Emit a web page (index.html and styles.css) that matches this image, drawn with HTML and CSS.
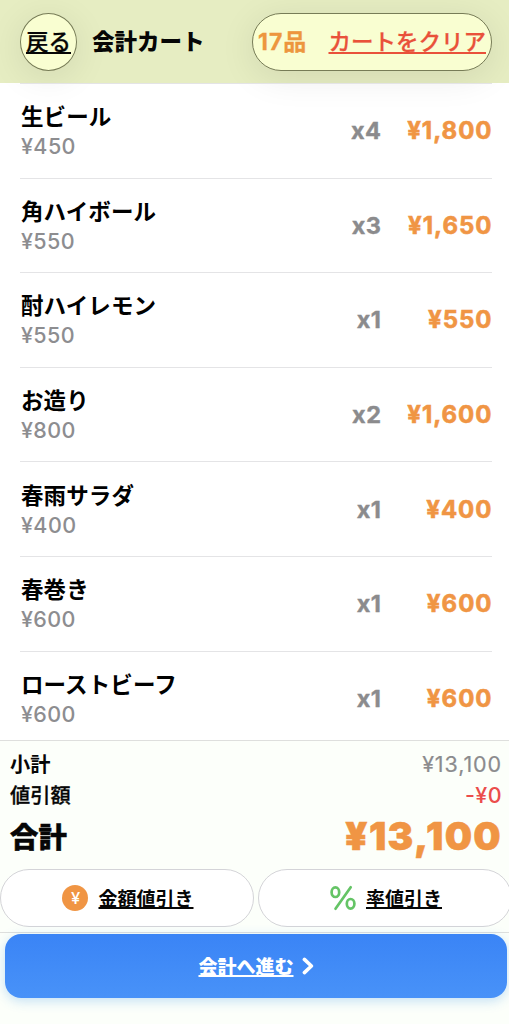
FILE: index.html
```html
<!DOCTYPE html>
<html lang="ja">
<head>
<meta charset="utf-8">
<meta name="viewport" content="width=device-width, initial-scale=1">
<title>会計カート</title>
<link rel="stylesheet" href="styles.css">
</head>
<body>
<div class="app">
  <header class="header">
    <button class="back"><span class="link">戻る</span></button>
    <h1 class="title">会計カート</h1>
    <div class="cart-pill"><span class="count">17品</span><span class="clear link">カートをクリア</span></div>
  </header>
  <main class="list">
    <div class="item"><div class="info"><div class="name">生ビール</div><div class="price">¥450</div></div><div class="qty">x4</div><div class="sum">¥1,800</div></div>
    <div class="item"><div class="info"><div class="name">角ハイボール</div><div class="price">¥550</div></div><div class="qty">x3</div><div class="sum">¥1,650</div></div>
    <div class="item"><div class="info"><div class="name">酎ハイレモン</div><div class="price">¥550</div></div><div class="qty">x1</div><div class="sum">¥550</div></div>
    <div class="item"><div class="info"><div class="name">お造り</div><div class="price">¥800</div></div><div class="qty">x2</div><div class="sum">¥1,600</div></div>
    <div class="item"><div class="info"><div class="name">春雨サラダ</div><div class="price">¥400</div></div><div class="qty">x1</div><div class="sum">¥400</div></div>
    <div class="item"><div class="info"><div class="name">春巻き</div><div class="price">¥600</div></div><div class="qty">x1</div><div class="sum">¥600</div></div>
    <div class="item"><div class="info"><div class="name">ローストビーフ</div><div class="price">¥600</div></div><div class="qty">x1</div><div class="sum">¥600</div></div>
  </main>
  <section class="summary">
    <div class="line subtotal"><span>小計</span><span class="value">¥13,100</span></div>
    <div class="line discount"><span>値引額</span><span class="value">-¥0</span></div>
    <div class="line total"><span>合計</span><span class="value">¥13,100</span></div>
    <div class="discounts">
      <button class="option"><span class="yen-icon">¥</span><span class="option-label">金額値引き</span></button>
      <button class="option">
        <svg class="percent-icon" viewBox="0 0 26 26" fill="none" stroke="#65c466" stroke-width="2.7" stroke-linecap="round"><ellipse cx="5.4" cy="7.2" rx="3.8" ry="4.8"/><ellipse cx="20.6" cy="18.8" rx="3.8" ry="4.8"/><path d="M20.7 2.3 5.5 23.7"/></svg>
        <span class="option-label">率値引き</span>
      </button>
    </div>
  </section>
  <footer class="footer">
    <button class="checkout"><span class="checkout-label">会計へ進む</span><svg class="chevron" viewBox="0 0 12 18" fill="none" stroke="#fff" stroke-width="3.6" stroke-linecap="round" stroke-linejoin="round"><path d="M2.4 2.4 9.4 9 2.4 15.6"/></svg></button>
  </footer>
</div>
</body>
</html>
```
FILE: styles.css
```css
* { box-sizing: border-box; }
body {
  margin: 0;
  font-family: Inter, "Noto Sans CJK JP", sans-serif;
  color: #060606;
  background: #fff;
}
button { font: inherit; color: inherit; padding: 0; margin: 0; }
.app {
  display: flex;
  flex-direction: column;
  width: 509px;
  height: 1024px;
  overflow: hidden;
}
.header {
  display: flex;
  align-items: center;
  flex: none;
  height: 83px;
  padding: 1px 17px 0 20px;
  background: #e6edc2;
  font-size: 22.5px;
  line-height: 32px;
}
.back, .cart-pill {
  height: 58px;
  border: 1px solid #777c57;
  background: #f9fed1;
  box-shadow: 0 6px 36px rgba(0, 0, 0, 0.09);
  white-space: nowrap;
}
.back {
  width: 57px;
  border-radius: 50%;
  font-weight: 500;
  -webkit-text-stroke: 0.25px;
}
.link {
  text-decoration: underline;
  text-decoration-thickness: 1.5px;
  text-underline-offset: 2px;
  text-decoration-skip-ink: none;
}
.title {
  margin: 0 0 0 15px;
  font-size: 22.5px;
  font-weight: 900;
  line-height: 32px;
}
.cart-pill {
  display: flex;
  align-items: center;
  justify-content: space-between;
  width: 240px;
  margin-left: auto;
  padding: 0 5px;
  border-radius: 29px;
}
.count { color: #ed963e; font-weight: 700; font-size: 23px; letter-spacing: 1px; -webkit-text-stroke: 0.3px; }
.clear { color: #e9513a; font-weight: 500; -webkit-text-stroke: 0.25px; }
.list {
  flex: none;
  height: 657px;
  padding: 0 17px 0 20px;
  overflow: hidden;
}
.item {
  display: flex;
  align-items: center;
  height: 94.6px;
  border-top: 1px solid #e4e4e6;
}
.info { flex: 1; padding: 1px 0 0 1px; }
.name {
  font-size: 22.5px;
  font-weight: 700;
  line-height: 30px;
  letter-spacing: 0.1px;
  color: #000;
}
.price {
  font-size: 21.5px;
  font-weight: 500;
  line-height: 28px;
  letter-spacing: 0.4px;
  color: #8d8d90;
}
.qty {
  font-size: 23.5px;
  font-weight: 700;
  letter-spacing: 0.5px;
  -webkit-text-stroke: 0.4px;
  color: #8b8b8d;
}
.sum {
  width: 111px;
  margin-right: -0.5px;
  text-align: right;
  font-size: 24px;
  font-weight: 700;
  letter-spacing: 1px;
  -webkit-text-stroke: 0.6px;
  color: #f09544;
}
.summary {
  flex: none;
  height: 192px;
  padding-top: 7px;
  border-top: 1px solid #dedfdd;
  background: #fcfffa;
}
.line {
  display: flex;
  align-items: center;
  justify-content: space-between;
  padding: 0 7px 0 10px;
  height: 31px;
  font-size: 20.2px;
}
.value { font-size: 21.5px; letter-spacing: 0.9px; }
.subtotal { font-weight: 700; }
.subtotal .value { font-weight: 400; color: #8b8b8d; -webkit-text-stroke: 0.2px; }
.discount { font-weight: 500; }
.discount > span:first-child { -webkit-text-stroke: 0.3px; }
.discount .value { color: #eb4d4b; letter-spacing: 0.4px; }
.total {
  height: 51px;
  font-size: 28.4px;
  font-weight: 900;
  -webkit-text-stroke: 0.5px;
}
.total .value { font-size: 38.5px; font-weight: 900; letter-spacing: 1.3px; color: #f09544; }
.discounts {
  display: flex;
  gap: 4px;
  width: 512px;
  padding-top: 8px;
}
.option {
  display: flex;
  align-items: center;
  justify-content: center;
  flex: 1;
  height: 58px;
  padding-left: 2px;
  border: 1.5px solid #d4d4d8;
  border-radius: 29px;
  background: #fff;
  font-size: 19px;
  font-weight: 700;
  line-height: 28px;
}
.option-label, .checkout-label {
  padding-top: 3px;
  text-decoration: underline;
  text-decoration-thickness: 1.5px;
  text-underline-offset: 1px;
  text-decoration-skip-ink: none;
}
.yen-icon {
  width: 26px;
  height: 26px;
  margin-right: 10px;
  border-radius: 50%;
  background: #f09544;
  color: #fff;
  font-size: 16.5px;
  font-weight: 500;
  line-height: 26px;
  text-align: center;
}
.percent-icon { width: 26px; height: 26px; margin-right: 10px; }
.footer {
  flex: 1;
  padding: 1px 2px 0 5px;
  border-top: 1px solid #dedfdd;
  background: #fcfffa;
}
.checkout {
  display: flex;
  align-items: center;
  justify-content: center;
  width: 502px;
  height: 64px;
  border: 0;
  border-radius: 16px;
  background: linear-gradient(#3a84f6, #4892f8);
  box-shadow: 0 3px 12px rgba(50, 145, 235, 0.28);
  color: #fff;
  font-size: 19px;
  font-weight: 800;
  line-height: 28px;
}
.chevron { width: 12px; height: 18px; margin-left: 8px; }
```
